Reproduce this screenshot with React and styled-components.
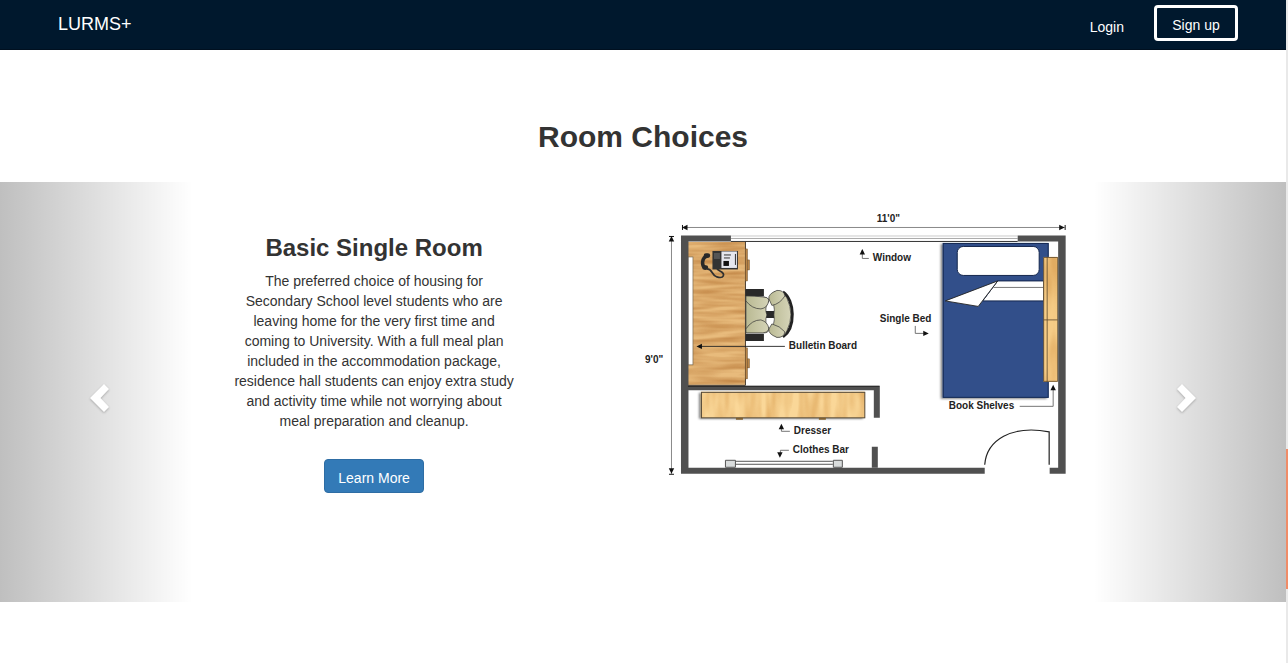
import React from "react";
import styled, { createGlobalStyle } from "styled-components";

const GlobalStyle = createGlobalStyle`
  *, *::before, *::after { box-sizing: border-box; }
  body {
    margin: 0;
    background: #fff;
    color: #333;
    font-family: "Liberation Sans", Arial, sans-serif;
    font-size: 14px;
    line-height: 20px;
  }
`;

const Page = styled.div`
  display: flex;
  min-height: 100vh;
`;

const Content = styled.div`
  flex: 1;
  min-width: 0;
`;

const ScrollRail = styled.div`
  width: 2px;
  background: #e9e9e9;
`;

const ScrollThumb = styled.div`
  height: 140px;
  margin-top: 449px;
  background: #f08c68;
`;

const Navbar = styled.header`
  height: 50px;
  padding: 0 48px 0 58px;
  background: #00182d;
  border-bottom: 1px solid #001020;
`;

const NavInner = styled.div`
  display: flex;
  justify-content: space-between;
  max-width: 1180px;
  margin: 0 auto;
`;

const Brand = styled.a`
  padding: 14px 0;
  color: #fff;
  font-size: 18px;
  line-height: 20px;
  text-decoration: none;
`;

const NavLinks = styled.nav`
  display: flex;
  align-items: flex-start;
  gap: 30px;
`;

const NavLink = styled.a`
  padding-top: 17px;
  color: #fff;
  text-decoration: none;
`;

const SignUpButton = styled.button`
  min-width: 84px;
  height: 36px;
  margin-top: 5px;
  padding: 4px 12px 0;
  border: 3px solid #fff;
  border-radius: 4px;
  background: transparent;
  color: #fff;
  font: inherit;
`;

const Title = styled.h2`
  margin: 70px 0 28px;
  font-size: 30px;
  line-height: 34px;
  text-align: center;
`;

const Carousel = styled.section`
  position: relative;
  min-height: 420px;
`;

const Slide = styled.article`
  display: grid;
  grid-template-columns: 3fr 1fr 4fr;
  width: 66.666%;
  margin: 0 auto;
  padding-top: 20px;
`;

const RoomInfo = styled.div`
  padding: 32px 18px 0 16px;
  text-align: center;
`;

const RoomName = styled.h3`
  margin: 0 0 9px;
  font-size: 24px;
  line-height: 28px;
`;

const RoomText = styled.p`
  margin: 0 0 28px;
`;

const LearnMore = styled.button`
  min-width: 100px;
  height: 34px;
  padding: 4px 12px 0;
  border: 1px solid #2e6da4;
  border-radius: 4px;
  background: #337ab7;
  color: #fff;
  font: inherit;
`;

const Plan = styled.svg`
  grid-column: 3;
  display: block;
  width: 100%;
  height: auto;
`;

const PlanLabel = styled.text`
  font-size: 10px;
  font-weight: bold;
  fill: #222;
`;

const Control = styled.button`
  position: absolute;
  top: 0;
  bottom: 0;
  ${(p) => (p.$side === "left" ? "left: 0;" : "right: 0;")}
  width: 15%;
  display: flex;
  align-items: center;
  justify-content: center;
  padding: 11px 0 0;
  padding-${(p) => p.$side}: 8px;
  border: 0;
  background: linear-gradient(
    to ${(p) => p.$side},
    rgba(0, 0, 0, 0) 0%,
    rgba(0, 0, 0, 0.25) 100%
  );
`;

const Chevron = styled.svg`
  width: 20px;
  height: 28px;
  overflow: visible;
  filter: drop-shadow(0 1px 1px rgba(0, 0, 0, 0.25));
`;

function Arrow({ x, y, dir }) {
  const angle = { up: 0, right: 90, down: 180, left: 270 }[dir];
  return (
    <path
      d="M0 0 L2.7 5.5 H-2.7 Z"
      fill="#111"
      transform={`translate(${x} ${y}) rotate(${angle})`}
    />
  );
}

function FloorPlan() {
  return (
    <Plan viewBox="643 202 429 280" role="img" aria-label="Basic single room floor plan">
      <defs>
        <filter id="grainX" x="0" y="0" width="1" height="1" colorInterpolationFilters="sRGB">
          <feTurbulence type="fractalNoise" baseFrequency="0.02 0.2" numOctaves="2" seed="4" />
          <feColorMatrix values="0 0 0 0 .74  0 0 0 0 .5  0 0 0 0 .25  1.6 0 0 0 -.5" />
          <feComposite in2="SourceGraphic" operator="in" result="g" />
          <feMerge>
            <feMergeNode in="SourceGraphic" />
            <feMergeNode in="g" />
          </feMerge>
        </filter>
        <filter id="grainY" x="0" y="0" width="1" height="1" colorInterpolationFilters="sRGB">
          <feTurbulence type="fractalNoise" baseFrequency="0.1 0.02" numOctaves="2" seed="8" />
          <feColorMatrix values="0 0 0 0 .88  0 0 0 0 .67  0 0 0 0 .38  2 0 0 0 -.7" />
          <feComposite in2="SourceGraphic" operator="in" result="g" />
          <feMerge>
            <feMergeNode in="SourceGraphic" />
            <feMergeNode in="g" />
          </feMerge>
        </filter>
        <filter id="shade" x="-10%" y="-10%" width="120%" height="120%">
          <feDropShadow dx="-2" dy="1" stdDeviation="1.3" floodOpacity=".5" />
        </filter>
        <linearGradient id="cushion">
          <stop offset="0" stopColor="#b9b992" />
          <stop offset="1" stopColor="#d5d4b8" />
        </linearGradient>
      </defs>

      {/* dimensions */}
      <g stroke="#888" strokeWidth="1">
        <path d="M682 227.5 H1065 M671.5 236 V474" />
        <path d="M682.5 225 V230 M1065.5 225 V230 M669 236.5 H674 M669 474.5 H674" stroke="#111" />
      </g>
      <Arrow x={682} y={227.5} dir="left" />
      <Arrow x={1065} y={227.5} dir="right" />
      <Arrow x={671.5} y={236} dir="up" />
      <Arrow x={671.5} y={474} dir="down" />

      {/* window */}
      <path d="M731 236 H1018" stroke="#ccc" />
      <path d="M731 238.5 H1018" stroke="#aaa" />
      <path d="M731 241.5 H1018" stroke="#333" />

      {/* desk */}
      <rect x="688" y="242" width="57" height="143" fill="#e8bb7c" filter="url(#grainX)" />
      <path d="M688 385.5 H745.5 V242" fill="none" stroke="#443626" />
      <rect x="688" y="257" width="5" height="108" fill="#fff" stroke="#77684f" strokeWidth=".7" />
      <g fill="#b98547" stroke="#6e4c25" strokeWidth=".5">
        <rect x="745.5" y="249" width="2" height="32" />
        <rect x="747.5" y="260" width="2" height="10" />
        <rect x="745.5" y="348" width="2" height="31" />
        <rect x="747.5" y="359" width="2" height="9" />
      </g>

      {/* telephone */}
      <path d="M707.5 256 C702 257 701 266 705.5 268" fill="none" stroke="#292929" strokeWidth="3.5" strokeLinecap="round" />
      <path d="M706 255.5 H708 M704.5 267.5 H706" stroke="#292929" strokeWidth="4.5" strokeLinecap="round" />
      <path d="M707 269 C713 269 711 275 717 277 C724 279 726 274 720 271 L717 269" fill="none" stroke="#303030" strokeWidth="1.7" />
      <rect x="712.5" y="251" width="25.5" height="18.5" fill="#333" />
      <rect x="714" y="253" width="6" height="6" fill="#555" />
      <rect x="721.5" y="251.5" width="15.5" height="16.5" fill="#e5e7ee" />
      <path d="M724 255 H731 M724 258 H730 M735.5 254 V265" stroke="#333" />
      <rect x="723.5" y="261" width="5.5" height="5" fill="#111" />

      {/* chair */}
      <path d="M745.5 289 H764 V296 H745.5 Z M745.5 334 H764 V341 H745.5 Z M765 311 H775 V318 H765 Z" fill="#292929" />
      <path d="M783 292 C795 300 796 328 783 337" fill="none" stroke="#222" strokeWidth="3" />
      <g stroke="#333" strokeWidth=".7" fill="url(#cushion)">
        <path d="M746 296 L764 297 Q769 298 769 301 Q764 308 767 315 Q764 323 769 329 Q769 333 764 333 L746 333 Z" />
        <path d="M746 301 Q752 309 761 309 Q768 308 769 300 Q768 297 763 297 Q754 296 746 296 Z" />
        <path d="M746 329 Q752 320 761 320 Q768 322 769 329 Q768 333 763 333 L746 333 Z" />
        <path d="M769 299 Q776 303 774 315 Q776 325 769 329 L776 337 Q784 338 787 331 Q795 315 787 298 Q781 289 774 292 Z" />
        <path d="M769 299 Q768 294 777 290.5 Q784 290 785 296 Q780 304 772 305.5 Z" />
        <path d="M769 329 Q768 334 777 337.5 Q784 338 785 332 Q780 326 772 324 Z" />
      </g>

      {/* bed */}
      <rect x="943" y="243" width="106" height="155" fill="#31508a" filter="url(#shade)" />
      <rect x="943.5" y="243.5" width="105" height="154" fill="none" stroke="#172b54" />
      <rect x="957.5" y="246.5" width="82" height="29" rx="6" fill="#fff" stroke="#14264c" />
      <path d="M998 281 H1044 V301 H983 Z" fill="#fff" stroke="#14264c" />
      <path d="M994 287.5 H1044" stroke="#555" strokeWidth=".8" />
      <path d="M945.5 301 L998 281 L978.5 306.5 Z" fill="#fff" stroke="#222" strokeWidth=".9" />
      <rect x="1050" y="242" width="8" height="15" fill="#fff" />

      {/* book shelves */}
      <rect x="1044" y="257" width="14" height="125" fill="#f6cc86" filter="url(#grainY)" />
      <path d="M1044 257.5 H1058 V381.5 H1044 Z M1047.5 257 V382 M1044 320 H1058" fill="none" stroke="#5d482a" strokeWidth=".8" />

      {/* dresser */}
      <rect x="701" y="392" width="164" height="26" fill="#f1bf71" filter="url(#shade)" />
      <rect x="701" y="392" width="164" height="26" fill="#fad798" filter="url(#grainY)" />
      <rect x="701.5" y="392.5" width="163.5" height="25.5" fill="none" stroke="#574b3a" />
      <path d="M736 419 H743 M819 419 H826" stroke="#806030" strokeWidth="2" />

      {/* walls */}
      <path
        d="M681 235.5 H731 V241.5 H688.5 V468 H985 V474 H681 Z M1018 235.5 H1066 V474 H1050 V468 H1058.5 V241.5 H1018 Z"
        fill="#505050"
      />
      <path d="M688 386 H880 V418 H874 V390.5 H688 Z M872 447 H878 V468 H872 Z" fill="#505050" />
      <path d="M688 386.5 H879.5" stroke="#292929" />

      {/* clothes bar */}
      <path d="M735 461.5 H833 M735 464.5 H833" stroke="#555" />
      <path d="M725.5 460.5 H735.5 V467.5 H725.5 Z M833.5 460.5 H842.5 V467.5 H833.5 Z" fill="#d9dcdc" stroke="#555" />

      {/* door */}
      <path d="M985 465 C987 440 1012 425 1049.5 432 V465" fill="none" stroke="#222" strokeWidth="1.2" />

      {/* callout lines */}
      <g fill="none" stroke="#666" strokeWidth=".9">
        <path d="M862.5 250 V258.5 H869" />
        <path d="M915.5 326 V333.5 H926" />
        <path d="M700 346.5 H785" stroke="#222" />
        <path d="M1020 406.5 H1053.5 V388" />
        <path d="M781.5 426 V431.5 H790" />
        <path d="M789 450.5 H780.5 V455" />
      </g>
      <Arrow x={862.5} y={249} dir="up" />
      <Arrow x={929} y={333.5} dir="right" />
      <Arrow x={696.5} y={346.5} dir="left" />
      <Arrow x={1053.5} y={385} dir="up" />
      <Arrow x={781.5} y={424} dir="up" />
      <Arrow x={780} y={458} dir="down" />

      <PlanLabel x="877" y="222">11'0"</PlanLabel>
      <PlanLabel x="645" y="363">9'0"</PlanLabel>
      <PlanLabel x="873" y="261">Window</PlanLabel>
      <PlanLabel x="880" y="322">Single Bed</PlanLabel>
      <PlanLabel x="789" y="349">Bulletin Board</PlanLabel>
      <PlanLabel x="949" y="409">Book Shelves</PlanLabel>
      <PlanLabel x="794" y="434">Dresser</PlanLabel>
      <PlanLabel x="793" y="453">Clothes Bar</PlanLabel>
    </Plan>
  );
}

export default function App() {
  return (
    <>
      <GlobalStyle />
      <Page>
        <Content>
          <Navbar>
            <NavInner>
              <Brand href="#">LURMS+</Brand>
              <NavLinks>
                <NavLink href="#login">Login</NavLink>
                <SignUpButton type="button">Sign up</SignUpButton>
              </NavLinks>
            </NavInner>
          </Navbar>
          <main>
            <Title>Room Choices</Title>
            <Carousel>
              <Slide>
                <RoomInfo>
                  <RoomName>Basic Single Room</RoomName>
                  <RoomText>
                    The preferred choice of housing for Secondary School level
                    students who are leaving home for the very first time and
                    coming to University. With a full meal plan included in the
                    accommodation package, residence hall students can enjoy
                    extra study and activity time while not worrying about meal
                    preparation and cleanup.
                  </RoomText>
                  <LearnMore type="button">Learn More</LearnMore>
                </RoomInfo>
                <FloorPlan />
              </Slide>
              <Control type="button" $side="left" aria-label="Previous">
                <Chevron viewBox="0 0 20 28">
                  <path d="M14 0 L19 5 L10.5 14 L19 23 L14 28 L0 14 Z" fill="#fff" />
                </Chevron>
              </Control>
              <Control type="button" $side="right" aria-label="Next">
                <Chevron viewBox="0 0 20 28">
                  <path d="M6 0 L1 5 L9.5 14 L1 23 L6 28 L20 14 Z" fill="#fff" />
                </Chevron>
              </Control>
            </Carousel>
          </main>
        </Content>
        <ScrollRail>
          <ScrollThumb />
        </ScrollRail>
      </Page>
    </>
  );
}
